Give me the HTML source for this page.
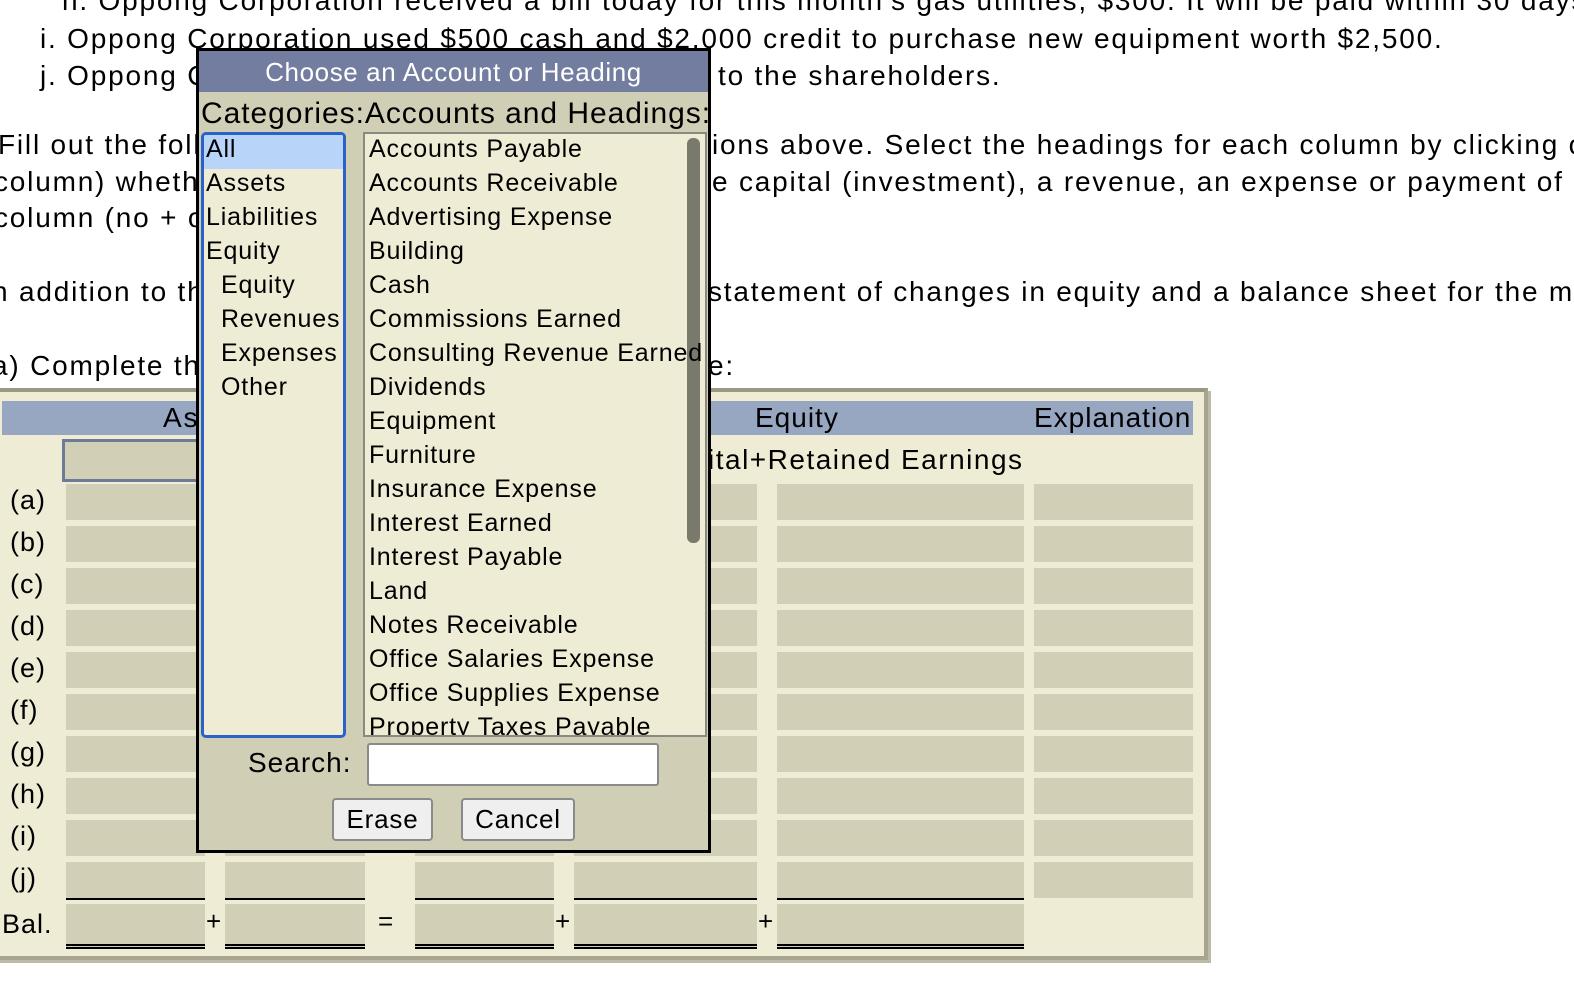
<!DOCTYPE html>
<html><head><meta charset="utf-8"><style>
body{margin:0;width:1574px;height:994px;overflow:hidden;background:#fff;font-family:"Liberation Sans",Arial,sans-serif;position:relative}
.t{position:absolute;font-size:28px;white-space:nowrap;line-height:1;color:#000;letter-spacing:1.8px}
.panel{position:absolute;left:-4px;top:388px;width:1212px;height:572px;background:#efecd6;border:4px solid #a7a590;border-top-color:#9a9882;box-sizing:border-box;box-shadow:3px 3px 0 #bdbba8}
.hdr{position:absolute;left:2px;top:401px;width:1191px;height:34px;background:#97a6c1}
.c{position:absolute;background:#d1cfb6;height:36px}
.lbl{position:absolute;font-size:27px;left:10px;letter-spacing:1px}
.dlg{position:absolute;left:196px;top:48px;width:515px;height:805px;border:3px solid #000;box-sizing:border-box;background:#d0cfb6}
.it{position:absolute;font-size:25px;white-space:nowrap;letter-spacing:0.85px}
</style></head><body>
<div class="t" style="left:62px;top:-13px">h. Oppong Corporation received a bill today for this month's gas utilities, $300. It will be paid within 30 days.</div>
<div class="t" style="left:40px;top:25px">i. Oppong Corporation used $500 cash and $2,000 credit to purchase new equipment worth $2,500.</div>
<div class="t" style="left:40px;top:62px">j. Oppong Corporation paid dividends</div>
<div class="t" style="left:718px;top:62px">to the shareholders.</div>
<div class="t" style="left:-2px;top:131px">Fill out the following</div>
<div class="t" style="left:712px;top:131px">ions above. Select the headings for each column by clicking on the</div>
<div class="t" style="left:-6px;top:168px">column) whether</div>
<div class="t" style="left:712px;top:168px">e capital (investment), a revenue, an expense or payment of divid</div>
<div class="t" style="left:-6px;top:204px">column (no + or</div>
<div class="t" style="left:-8px;top:278px">n addition to the</div>
<div class="t" style="left:708px;top:278px">statement of changes in equity and a balance sheet for the month</div>
<div class="t" style="left:-8px;top:352px">a) Complete the</div>
<div class="t" style="left:708px;top:352px">e:</div>

<div class="panel"></div>
<div class="hdr"></div>
<div class="t" style="left:163px;top:404px">As</div>
<div class="t" style="left:755px;top:404px;letter-spacing:1px">Equity</div>
<div class="t" style="left:1034px;top:404px;letter-spacing:1px">Explanation</div>
<div style="position:absolute;left:62px;top:439px;width:143px;height:43px;border:3px solid #6f7a97;box-sizing:border-box;background:#d1cfb6"></div>
<div class="t" style="left:708px;top:446px;letter-spacing:1.5px">ital+Retained Earnings</div>

<div id="rows"></div>
<script>
var labs=["(a)","(b)","(c)","(d)","(e)","(f)","(g)","(h)","(i)","(j)"];
var cols=[[66,139],[225,140],[415,139],[574,183],[777,247],[1034,159]];
var h="";
for(var i=0;i<10;i++){var y=484+i*42;
h+='<div class="lbl" style="top:'+(y+1)+'px">'+labs[i]+'</div>';
cols.forEach(function(c,k){h+='<div class="c" style="left:'+c[0]+'px;top:'+y+'px;width:'+c[1]+'px;'+(i==9&&k<5?'border-bottom:2px solid #000;':'')+'"></div>';});}
h+='<div class="lbl" style="left:2px;top:909px">Bal.</div>';
for(var k=0;k<5;k++){var c=cols[k];h+='<div class="c" style="left:'+c[0]+'px;top:904px;width:'+c[1]+'px;height:40px;border-bottom:5px double #000"></div>';}
[[206,"+"],[378,"="],[555,"+"],[758,"+"]].forEach(function(p){h+='<div class="t" style="left:'+p[0]+'px;top:908px;font-size:26px">'+p[1]+'</div>';});
document.getElementById("rows").innerHTML=h;
</script>

<div class="dlg">
<div style="position:absolute;left:0;top:0;width:509px;height:41px;background:#727d9f;color:#fff;font-size:26px;text-align:center;line-height:42px;letter-spacing:0.6px">Choose an Account or Heading</div>
<div style="position:absolute;left:2px;top:46px;font-size:30px;white-space:nowrap;letter-spacing:0.95px">Categories:Accounts and Headings:</div>
<div style="position:absolute;left:2px;top:81px;width:145px;height:606px;border:3px solid #2a62c9;border-radius:5px;background:#efecd5;box-sizing:border-box;overflow:hidden">
<div style="position:absolute;left:0;top:0;width:140px;height:34px;background:#b8d4f8"></div>
</div>
<div style="position:absolute;left:164px;top:81px;width:344px;height:605px;border:2px solid #8a8a80;background:#efecd5;box-sizing:border-box"></div>
<div style="position:absolute;left:488px;top:87px;width:13px;height:405px;background:#7a7a6c;border-radius:6px"></div>
<div id="L"></div>
<div style="position:absolute;left:49px;top:696px;font-size:28px;letter-spacing:1px">Search:</div>
<div style="position:absolute;left:168px;top:692px;width:292px;height:43px;background:#fff;border:2px solid #8a8a8a;border-radius:3px;box-sizing:border-box"></div>
<div style="position:absolute;left:133px;top:747px;width:101px;height:43px;background:#efefef;border:2px solid #8a8a8a;border-radius:4px;box-sizing:border-box;font-size:26px;text-align:center;line-height:39px;letter-spacing:0.8px">Erase</div>
<div style="position:absolute;left:262px;top:747px;width:114px;height:43px;background:#efefef;border:2px solid #8a8a8a;border-radius:4px;box-sizing:border-box;font-size:26px;text-align:center;line-height:39px;letter-spacing:0.8px">Cancel</div>
</div>
<script>
var cat=[["All",0],["Assets",0],["Liabilities",0],["Equity",0],["Equity",1],["Revenues",1],["Expenses",1],["Other",1]];
var acc=["Accounts Payable","Accounts Receivable","Advertising Expense","Building","Cash","Commissions Earned","Consulting Revenue Earned","Dividends","Equipment","Furniture","Insurance Expense","Interest Earned","Interest Payable","Land","Notes Receivable","Office Salaries Expense","Office Supplies Expense","Property Taxes Payable"];
var s="";
cat.forEach(function(c,i){s+='<div class="it" style="left:'+(7+c[1]*15)+'px;top:'+(84+i*34)+'px">'+c[0]+'</div>';});
acc.forEach(function(a,i){s+='<div class="it" style="left:170px;top:'+(84+i*34)+'px">'+a+'</div>';});
document.getElementById("L").innerHTML='<div style="position:absolute;left:0;top:0;width:509px;height:684px;overflow:hidden">'+s+'</div>';
</script>
</body></html>
